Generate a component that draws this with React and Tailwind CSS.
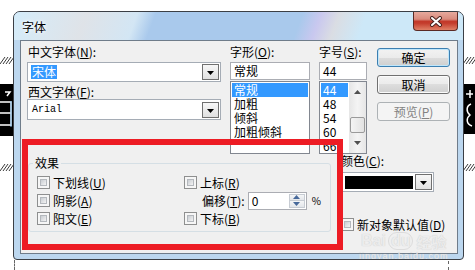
import React from 'react';

const K = ({ k }) => (
  <>
    (<span className="underline">{k}</span>)
  </>
);

const Check = () => (
  <span className="w-[13px] h-[13px] shrink-0 border border-[#8e8f8f] bg-[#f6f6f6] p-[2px]">
    <span className="block w-full h-full border border-[#b4b8bd] bg-[linear-gradient(135deg,#c9cdd2,#f3f3f3)]" />
  </span>
);

const Arrow = ({ up, color = '#000' }) => (
  <svg width="7" height="4" viewBox="0 0 7 4">
    <path d={up ? 'M0 4H7L3.5 0Z' : 'M0 0H7L3.5 4Z'} fill={color} />
  </svg>
);

const DropBtn = () => (
  <span className="w-[17px] h-[16px] shrink-0 border border-[#707070] bg-[linear-gradient(#f7f7f7,#e0e0e0)] flex items-center justify-center pt-[2px]">
    <Arrow />
  </span>
);

const Combo = ({ className, children }) => (
  <div className={`border border-[#a5acb5] bg-white flex items-center justify-between pl-[3px] pr-[1px] ${className}`}>
    {children}
    <DropBtn />
  </div>
);

const Hatch = () => (
  <svg width="13" height="7" viewBox="0 0 13 7">
    {[0, 3, 6, 9].map((x) => (
      <line key={x} x1={x} y1="7" x2={x + 5} y2="0" stroke="#3a3a3a" strokeWidth="1" />
    ))}
  </svg>
);

const Btn = ({ children, kind }) => {
  const styles = {
    def: 'border-[#3c7fb1] shadow-[inset_0_0_0_1px_#bfe6fb]',
    normal: 'border-[#707070] shadow-[inset_0_0_0_1px_#fbfbfb]',
    off: 'border-[#adb2b5] text-[#838383]',
  };
  return (
    <div
      className={`h-[19px] rounded-[3px] border flex items-center justify-center ${
        kind === 'off'
          ? 'bg-[#f4f4f4]'
          : 'bg-[linear-gradient(#f2f2f2_0%,#ebebeb_50%,#dddddd_50%,#cfcfcf_100%)]'
      } ${styles[kind]}`}
    >
      {children}
    </div>
  );
};

export default function App() {
  const styles = ['常规', '加粗', '倾斜', '加粗倾斜'];
  const sizes = ['44', '48', '54', '60', '66'];

  return (
    <div className="relative w-[475px] h-[270px] overflow-hidden bg-white pl-[13px] pt-[11px] font-['Noto_Sans_CJK_SC','Noto_Sans',sans-serif] text-[12px] leading-none text-black">
      {/* document behind the dialog */}
      <div className="absolute left-0 top-[57px]"><Hatch /></div>
      <div className="absolute left-0 top-[164px]"><Hatch /></div>
      <div className="absolute left-[463px] top-[57px]"><Hatch /></div>
      <div className="absolute left-[463px] top-[164px]"><Hatch /></div>
      <div className="absolute left-0 top-[84px] w-[13px] h-[52px] bg-black">
        <svg width="13" height="52" viewBox="0 0 13 52">
          <path d="M5 8H10L7 12" stroke="#fff" fill="none" strokeWidth="1.5" />
          <path d="M0 18H11V42M0 29H11M0 41H11" stroke="#fff" fill="none" strokeWidth="1.5" />
          <path d="M11 17V43" stroke="#7fb8e6" strokeWidth="1" />
        </svg>
      </div>
      <div className="absolute left-[464px] top-[84px] w-[11px] h-[50px] bg-black">
        <svg width="11" height="50" viewBox="0 0 11 50">
          <path d="M2 10H9M6 6V14" stroke="#fff" fill="none" strokeWidth="1.5" />
          <path d="M7 20C2 22 2 28 6 31C2 34 2 40 8 42" stroke="#fff" fill="none" strokeWidth="1.5" />
        </svg>
      </div>
      <div className="absolute left-[14px] top-[260px] h-[10px] border-l border-dashed border-[#666]" />
      <div className="absolute left-[448px] top-[261px] h-[9px] border-l border-dashed border-[#666]" />

      {/* dialog window */}
      <div className="relative w-[451px] h-[249px] flex flex-col overflow-hidden rounded-t-[7px] rounded-b-[4px] border border-[#3b3f45] bg-[#bcd7ef]">
        <div className="h-[28px] shrink-0 flex items-start bg-[linear-gradient(110deg,#d4ecfa_0%,#dfe3e8_16%,#d3e6f4_27%,#a9c9ec_31%,#a9c9ec_63%,#c9c8ef_67%,#dadde3_71%,#cde8f8_77%,#cde8f8_100%)]">
          <span className="ml-[7px] mt-[9px] px-[1px] h-[12px] [text-shadow:0_0_5px_#ffffff,0_0_3px_#ffffff]">字体</span>
          <div className="ml-auto mr-[5px] w-[45px] h-[19px] rounded-b-[4px] border border-t-0 border-[#5b2a24] bg-[linear-gradient(#e6a99d_0%,#d98b7d_40%,#c3392a_52%,#c43c2c_62%,#df8066_100%)] flex items-center justify-center">
            <svg width="14" height="11" viewBox="0 0 14 11">
              <path d="M3 2L11 9M11 2L3 9" stroke="#4a2520" strokeWidth="4" strokeLinecap="round" />
              <path d="M3 2L11 9M11 2L3 9" stroke="#ffffff" strokeWidth="2" strokeLinecap="round" />
            </svg>
          </div>
        </div>

        <div className="ml-[6px] mr-[5px] h-[214px] border border-[#6f7c8a] bg-[#f0f0f0] flex flex-col">
          {/* top row */}
          <div className="flex items-start h-[113px] pt-[5px] shrink-0">
            <div className="ml-[6px] w-[194px] flex flex-col">
              <div className="h-[12px] pl-[1px]">中文字体<K k="N" />:</div>
              <Combo className="mt-[4px] h-[20px]">
                <span className="bg-[#3399ff] text-white px-[1px] h-[14px] flex items-center">宋体</span>
              </Combo>
              <div className="mt-[4px] h-[12px] pl-[1px]">西文字体<K k="F" />:</div>
              <Combo className="mt-[1px] h-[21px]">
                <span className="font-['Liberation_Mono',monospace] text-[10px] pl-[1px]">Arial</span>
              </Combo>
            </div>

            <div className="ml-[9px] w-[80px] flex flex-col">
              <div className="h-[12px]">字形<K k="O" />:</div>
              <div className="mt-[4px] h-[18px] border border-[#abadb3] bg-white flex items-center pl-[3px]">常规</div>
              <div className="mt-[1px] h-[73px] border border-[#828790] bg-white overflow-hidden flex flex-col">
                {styles.map((s, i) => (
                  <div
                    key={s}
                    className={`h-[14px] shrink-0 flex items-center pl-[2px] mx-[1px] ${i === 0 ? 'mt-[1px] bg-[#3399ff] text-white' : ''}`}
                  >
                    {s}
                  </div>
                ))}
              </div>
            </div>

            <div className="ml-[9px] w-[48px] flex flex-col">
              <div className="h-[12px]">字号<K k="S" />:</div>
              <div className="mt-[4px] h-[18px] border border-[#abadb3] bg-white flex items-center pl-[3px]">44</div>
              <div className="mt-[1px] h-[73px] border border-[#828790] bg-white overflow-hidden flex">
                <div className="flex-1 flex flex-col">
                  {sizes.map((s, i) => (
                    <div
                      key={s}
                      className={`h-[14px] shrink-0 flex items-center pl-[2px] mx-[1px] ${i === 0 ? 'mt-[1px] bg-[#3399ff] text-white' : ''}`}
                    >
                      {s}
                    </div>
                  ))}
                </div>
                <div className="w-[17px] shrink-0 flex flex-col items-center bg-[linear-gradient(90deg,#e6e6e6,#f4f4f4,#e6e6e6)]">
                  <div className="h-[20px] flex items-center"><Arrow up color="#505050" /></div>
                  <div className="flex-1 w-full flex flex-col items-center">
                    <div className="mt-[15px] w-[15px] h-[16px] rounded-[2px] border border-[#9a9a9a] bg-[linear-gradient(90deg,#f4f4f4,#e2e2e2)]" />
                  </div>
                  <div className="h-[20px] flex items-center"><Arrow color="#505050" /></div>
                </div>
              </div>
            </div>

            <div className="ml-[10px] mt-[2px] w-[73px] flex flex-col gap-[8px]">
              <Btn kind="def">确定</Btn>
              <Btn kind="normal">取消</Btn>
              <Btn kind="off">预览<K k="P" /></Btn>
            </div>
          </div>

          {/* bottom row */}
          <div className="flex items-start">
            <div className="relative ml-[7px] mt-[9px] w-[303px] h-[69px] rounded-[3px] border border-[#d5dfe5] pt-[12px] pl-[8px]">
              <span className="absolute -top-[7px] left-[4px] h-[12px] px-[2px] bg-[#f0f0f0]">效果</span>
              <div className="flex flex-col gap-[5px]">
                <div className="h-[13px] grid grid-cols-[147px_1fr] items-center">
                  <div className="flex items-center gap-[3px]"><Check /><span>下划线<K k="U" /></span></div>
                  <div className="flex items-center gap-[3px]"><Check /><span>上标<K k="R" /></span></div>
                </div>
                <div className="h-[13px] grid grid-cols-[147px_1fr] items-center">
                  <div className="flex items-center gap-[3px]"><Check /><span>阴影<K k="A" /></span></div>
                  <div className="h-[13px] flex items-center pl-[18px]">
                    <span>偏移<K k="T" />:</span>
                    <div className="ml-[3px] w-[59px] h-[18px] shrink-0 border border-[#abadb3] bg-white flex">
                      <span className="flex-1 pl-[3px] flex items-center">0</span>
                      <div className="w-[16px] my-[1px] mr-[1px] flex flex-col border border-[#c7ccd3]">
                        <span className="flex-1 flex items-center justify-center bg-[linear-gradient(#f5f6f7,#e3e6ea)] border-b border-[#c7ccd3]"><Arrow up color="#47699a" /></span>
                        <span className="flex-1 flex items-center justify-center bg-[linear-gradient(#f5f6f7,#e3e6ea)]"><Arrow color="#47699a" /></span>
                      </div>
                    </div>
                    <span className="ml-[5px] text-[10px]">%</span>
                  </div>
                </div>
                <div className="h-[13px] grid grid-cols-[147px_1fr] items-center">
                  <div className="flex items-center gap-[3px]"><Check /><span>阳文<K k="E" /></span></div>
                  <div className="flex items-center gap-[3px]"><Check /><span>下标<K k="B" /></span></div>
                </div>
              </div>
            </div>

            <div className="ml-[10px] mt-[1px] w-[93px] flex flex-col">
              <div className="h-[12px]">颜色<K k="C" />:</div>
              <div className="mt-[5px] h-[20px] border border-[#a5acb5] bg-white flex items-center pl-[3px] pr-[1px] gap-[2px]">
                <span className="flex-1 h-[13px] bg-black" />
                <DropBtn />
              </div>
              <div className="mt-[26px] flex items-center gap-[3px] w-[110px]">
                <Check />
                <span>新对象默认值<K k="D" /></span>
              </div>
            </div>
          </div>
        </div>

        {/* annotation and watermark on top */}
        <div className="absolute left-[8px] top-[127px] w-[321px] h-[111px] border-[6px] border-[#ed1c24]" />
        <div className="absolute left-[345px] top-[220px] flex flex-col items-center text-[#ececec] [text-shadow:0_0_1px_#c4c4c4] pointer-events-none">
          <div className="flex items-center font-['Liberation_Sans',sans-serif] font-bold text-[16px] leading-none">
            <span>Bai</span>
            <span className="ml-[2px] rounded-full px-[2px] border border-[#dcdcdc]">du</span>
            <span className="ml-[3px] font-['Noto_Sans_CJK_SC',sans-serif] text-[15px]">经验</span>
          </div>
          <div className="mt-[2px] text-[9px] font-['Liberation_Sans',sans-serif] tracking-[1px]">jingyan.baidu.com</div>
        </div>
      </div>
    </div>
  );
}
